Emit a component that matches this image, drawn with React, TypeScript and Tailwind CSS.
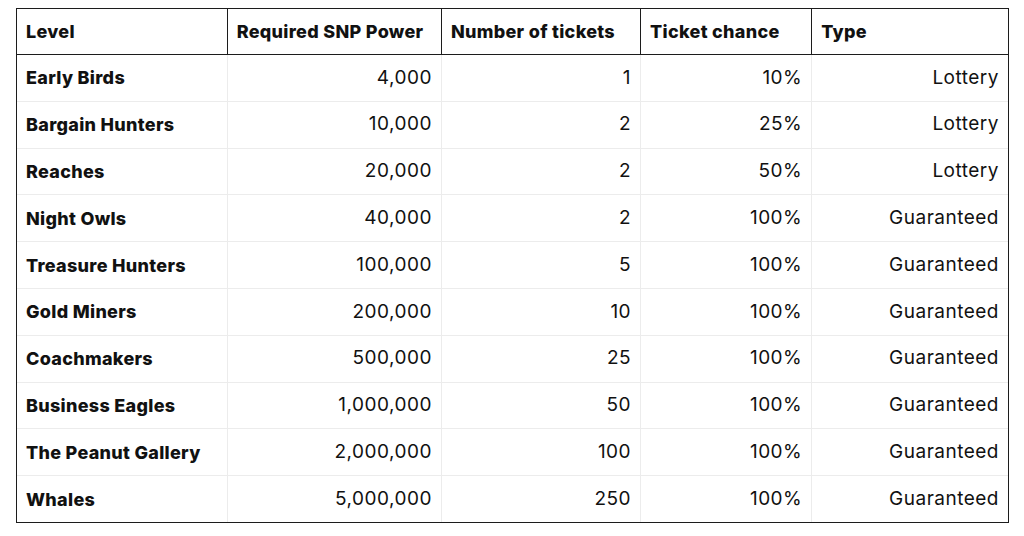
const rows = [
  ["Early Birds", "4,000", "1", "10%", "Lottery"],
  ["Bargain Hunters", "10,000", "2", "25%", "Lottery"],
  ["Reaches", "20,000", "2", "50%", "Lottery"],
  ["Night Owls", "40,000", "2", "100%", "Guaranteed"],
  ["Treasure Hunters", "100,000", "5", "100%", "Guaranteed"],
  ["Gold Miners", "200,000", "10", "100%", "Guaranteed"],
  ["Coachmakers", "500,000", "25", "100%", "Guaranteed"],
  ["Business Eagles", "1,000,000", "50", "100%", "Guaranteed"],
  ["The Peanut Gallery", "2,000,000", "100", "100%", "Guaranteed"],
  ["Whales", "5,000,000", "250", "100%", "Guaranteed"],
];

const headers = ["Level", "Required SNP Power", "Number of tickets", "Ticket chance", "Type"];

export default function App() {
  return (
    <div className="w-[1024px] h-[536px] bg-white pt-2 pl-4 font-['Inter',sans-serif] text-[#111]">
      <div className="w-[993px] border-[1.5px] border-[#1c1c1c]">
        <table className="table-fixed border-collapse w-full">
          <colgroup>
            <col className="w-[210px]" />
            <col className="w-[214px]" />
            <col className="w-[199px]" />
            <col className="w-[171px]" />
            <col className="w-[196px]" />
          </colgroup>
          <thead>
            <tr className="h-[45.5px]">
              {headers.map((h, i) => (
                <th
                  key={h}
                  className={
                    "border-b-[1.5px] border-[#1c1c1c] px-[9px] text-left text-[18px] font-extrabold tracking-[0.3px]" +
                    (i > 0 ? " border-l-[1.5px]" : "")
                  }
                >
                  {h}
                </th>
              ))}
            </tr>
          </thead>
          <tbody>
            {rows.map((r, ri) => (
              <tr key={r[0]} className="h-[46.8px]">
                <td
                  className={
                    "px-[9px] text-[18px] font-extrabold tracking-[0.3px]" +
                    (ri < rows.length - 1 ? " border-b border-[#ececec]" : "")
                  }
                >
                  {r[0]}
                </td>
                {r.slice(1).map((c, i) => (
                  <td
                    key={i}
                    className={
                      "border-l border-[#ececec] px-[9px] text-right text-[19px] font-normal tracking-[0.5px]" +
                      (ri < rows.length - 1 ? " border-b" : "")
                    }
                  >
                    {c}
                  </td>
                ))}
              </tr>
            ))}
          </tbody>
        </table>
      </div>
    </div>
  );
}
